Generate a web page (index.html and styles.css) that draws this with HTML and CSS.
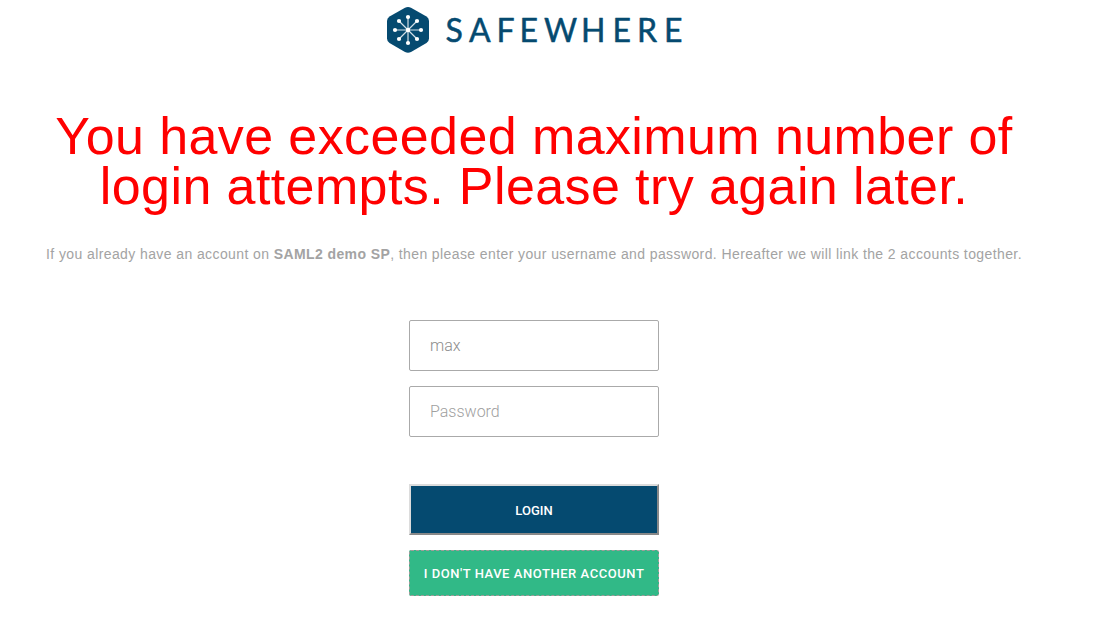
FILE: index.html
```html
<!DOCTYPE html>
<html lang="en">
<head>
    <meta charset="UTF-8">
    <meta name="viewport" content="width=device-width, initial-scale=1.0">
    <title>Safewhere - Login</title>
    <link rel="stylesheet" href="styles.css">
</head>
<body>
    <div class="page">
        <div class="logo">
            <svg width="294" height="48" viewBox="0 0 294 48" role="img" aria-label="Safewhere">
                <path class="logo-hex" d="M18 1.700 Q21 0.200 24 1.700 L39.500 10.500 Q42 12 42 15 V32.500 Q42 35.500 39.500 37 L24 46 Q21 47.500 18 46 L2.500 37 Q0 35.500 0 32.500 V15 Q0 12 2.500 10.500 Z"/>
                <path class="logo-lines" d="M21 11 V37 M8 24 H34 M12 15 L30 33 M30 15 L12 33"/>
                <g class="logo-dots">
                    <circle cx="21" cy="24" r="2.2"/>
                    <circle cx="21" cy="11" r="2.1"/>
                    <circle cx="21" cy="37" r="2.1"/>
                    <circle cx="8" cy="24" r="2.1"/>
                    <circle cx="34" cy="24" r="2.1"/>
                    <circle cx="12" cy="15" r="2.1"/>
                    <circle cx="30" cy="15" r="2.1"/>
                    <circle cx="12" cy="33" r="2.1"/>
                    <circle cx="30" cy="33" r="2.1"/>
                </g>
                <text class="logo-text" x="58.5 82 109.500 132.500 157 194 225.500 250 277" y="35.5">SAFEWHERE</text>
            </svg>
        </div>

        <h1 class="error">You have exceeded maximum number of login attempts. Please try again later.</h1>
        <p class="info">If you already have an account on <strong>SAML2 demo SP</strong>, then please enter your username and password. Hereafter we will link the 2 accounts together.</p>

        <form class="login-form">
            <input type="text" name="username" value="max">
            <input type="password" name="password" placeholder="Password">
            <button type="button" class="btn-login">LOGIN</button>
            <button type="button" class="btn-other">I DON'T HAVE ANOTHER ACCOUNT</button>
        </form>
    </div>
</body>
</html>
```

FILE: styles.css
```css
* { box-sizing: border-box; }
body { margin: 0; background-color: #fff; font-family: Arial, "Liberation Sans", sans-serif; }

.page { width: 1068px; padding-top: 6px; display: flex; flex-direction: column; align-items: center; }

.logo { height: 48px; }
.logo svg { display: block; overflow: visible; }
.logo-hex { fill: #054a70; }
.logo-lines { fill: none; stroke: #d3dfe7; stroke-width: 1.2; }
.logo-dots { fill: #fff; }
.logo-text { font-family: Lato, sans-serif; font-size: 32px; fill: #054a70; stroke: #054a70; stroke-width: 0.5; stroke-linejoin: round; }

.error { width: 980px; margin: 57px 0 0; color: #f00; font-size: 52px; line-height: 50px; font-weight: normal; letter-spacing: 0.4px; text-align: center; }
.info { margin: 33px 0 0; color: #a3a3a3; font-size: 14px; line-height: 20px; letter-spacing: 0.4px; white-space: nowrap; }

.login-form { width: 250px; margin-top: 56px; display: flex; flex-direction: column; }
.login-form input { height: 51px; margin-bottom: 15px; padding: 0 20px; border: 1px solid #aaa; border-radius: 2px; color: #8c8c8c; font-family: Roboto, sans-serif; font-size: 16px; font-weight: 300; outline: none; }
.login-form input::placeholder { color: #a0a0a0; }
.login-form button { color: #fff; font-family: Roboto, sans-serif; font-size: 13px; font-weight: 500; padding: 0; }
.login-form .btn-login { height: 51px; margin-top: 32px; padding-top: 2px; background-color: #054a70; border: 2px solid; border-color: #dcdcdc #888 #888 #dcdcdc; }
.btn-other { height: 46px; margin-top: 15px; background-color: #31b987; border: 1px dashed #a39a9a; border-radius: 2px; letter-spacing: 0.55px; }
```
